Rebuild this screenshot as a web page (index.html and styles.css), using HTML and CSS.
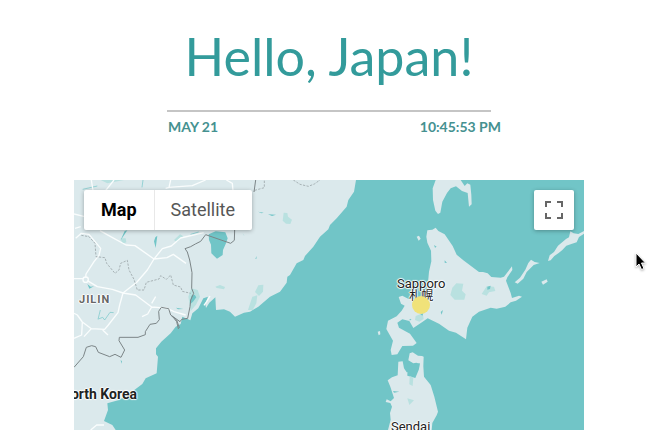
FILE: index.html
```html
<!DOCTYPE html>
<html lang="en">
<head>
<meta charset="utf-8">
<meta name="viewport" content="width=device-width, initial-scale=1">
<title>Hello, Japan!</title>
<link rel="stylesheet" href="styles.css">
</head>
<body>
<main class="page">
  <header class="intro">
    <h1 class="greeting">Hello, Japan!</h1>
    <div class="clock">
      <span>MAY 21</span>
      <time>10:45:53 PM</time>
    </div>
  </header>

  <section class="map" aria-label="Map of Japan">
    <svg class="terrain" viewBox="0 0 1530 750" preserveAspectRatio="xMidYMin slice" aria-hidden="true">
      <g class="land">
        <!-- mainland -->
        <path d="M0 0H846L840 35 823 60 818 80 788 115 768 135 763 148 738 170 718 200 693 228 688 240 668 250 648 285 640 290 638 308 618 335 588 350 553 380 528 395 510 398 483 410 468 395 450 388 426 390 424 352 406 368 396 384 394 372 402 350 388 355 373 385 355 400 349 421 325 410 320 432 305 440 290 460 262 485 246 505 246 523 252 530 248 580 215 595 205 612 185 627 160 645 135 660 100 670 102 690 90 723 115 735 125 750H0Z"/>
        <!-- Sakhalin -->
        <path d="M1085 0 1076 25 1077 60 1084 92 1092 102 1099 98 1105 65 1119 39 1130 25 1146 19 1164 33 1181 39 1185 80 1193 73 1192 45 1189 14 1180 10 1172 18 1160 0Z"/>
        <!-- Hokkaido -->
        <path d="M1060 151 1075 149 1085 143 1093 153 1112 163 1136 198 1148 224 1168 241 1194 260 1215 276 1227 276 1241 280 1252 291 1280 293 1290 290 1314 259 1315 270 1300 292 1296 302 1310 339 1314 354 1335 347 1344 350 1326 362 1310 367 1294 380 1268 386 1250 383 1215 395 1195 410 1180 443 1176 478 1146 458 1125 452 1095 431 1061 415 1045 426 1018 444 1006 423 985 418 970 428 975 443 1008 461 1028 489 1017 497 985 498 970 523 953 525 950 510 957 482 937 447 942 422 968 409 983 392 992 377 981 371 974 351 985 347 1004 357 1040 356 1060 330 1065 275 1072 244 1071 212 1060 188 1057 170Z"/>
        <!-- Honshu -->
        <path d="M973 545 986 544 990 565 998 577 1016 574 1022 569 1035 568 1036 551 1027 548 1018 550 1003 541 1007 520 1016 517 1032 527 1044 528 1049 530 1048 559 1050 590 1070 615 1081 650 1092 695 1088 706 1075 729 1073 750H942L950 719 948 699 954 680 949 669 935 666 938 658 950 664 960 654 949 620 941 601 954 592 971 586Z"/>
        <path d="M1001 548 1020 553 1038 550 1034 570 1024 594 1000 587Z" class="sea"/>
        <!-- islands -->
        <path d="M1028 170 1035 167 1040 176 1034 182ZM911 455 918 453 919 463 914 466ZM1322 307 1338 293 1354 269 1363 249 1371 239 1382 246 1397 249 1379 255 1358 276 1348 296 1331 311ZM1402 305 1418 298 1421 305 1407 314ZM1422 243 1427 226 1440 216 1452 197 1476 177 1485 172 1489 154 1499 160 1513 162 1530 153V161L1515 171 1508 187 1492 192 1477 197 1465 210 1454 219 1441 228 1430 241Z"/>
      </g>
      <g class="park">
        <path d="M629 98 640 99 642 110 654 119 649 132 636 131 626 122ZM424 320 438 315 453 321 450 328 428 324ZM553 316 568 314 567 335 555 348 543 336ZM535 350 550 346 547 370 536 390 522 390ZM352 325 371 330 378 350 366 374 350 393 343 350ZM1135 323 1147 310 1168 311 1164 332 1175 343 1171 359 1142 359 1129 345ZM1223 342 1238 319 1260 320 1264 333 1245 337 1238 347ZM1025 408 1046 400 1049 417 1036 425 1023 420ZM1007 589 1018 592 1016 618 1006 613ZM1000 655 1020 661 1006 675Z"/>
        <path d="M140 175 155 175 157 187 145 192ZM80 0 150 0 100 10ZM300 180 318 163 328 169 309 187Z"/>
      </g>
      <g class="water">
        <!-- Lake Khanka -->
        <path d="M404 163 425 154 454 157 461 175 456 190 447 210 446 225 429 236 412 220 411 194 405 180Z"/>
        <path d="M352 347 362 344 367 352 357 365 348 373ZM552 95 569 98 563 100ZM582 103 606 104 594 108ZM505 158 512 170 509 164ZM544 236 548 228 547 237ZM40 312 50 320 60 319 46 326ZM244 172 250 167 245 204 240 184ZM152 153 160 151 139 182ZM140 540 144 544 142 551ZM306 383 328 387 312 388ZM1080 195 1088 200 1083 203ZM1112 241 1119 249 1112 248ZM1100 396 1107 390 1103 404ZM1240 320 1250 317 1248 327 1240 329ZM1038 401 1048 400 1045 407ZM1008 416 1013 420 1006 421ZM957 633 976 635 960 638Z"/>
        <path class="river" d="M72 418 79 390M73 417 86 412 92 420 108 397 119 398M26 28 70 18M204 22 207 0M350 163 374 156"/>
      </g>
      <g class="road">
        <path d="M52 0 57 32M93 34 120 0M275 25 285 22 290 0M285 22 355 17 395 0M457 0 475 10 477 32M0 102 32 110M3 145 20 140M5 175 22 160 45 163 80 205 75 226 60 245 36 282 35 293M78 152 110 170 156 195 183 197 240 237 265 206 292 198 320 174 389 158M240 237 279 233 298 223 336 250M240 237 220 270 189 306 147 339 137 375 132 398 103 435 92 448 52 446 25 426 10 405 0 400M0 296 27 296M40 302 70 320 115 328 147 339M147 339 185 345 233 381 258 383 275 383M245 350 233 370M233 381 221 402 204 410M25 426 23 465 0 475M52 446 30 470M86 450 102 465M275 383 300 395 335 405M50 750 68 735 90 735M390 376 398 365 408 348"/>
        <circle cx="35" cy="299" r="8"/>
      </g>
      <path class="province" d="M22 166 45 170 63 190 66 230 93 233 98 250 123 280 135 270 140 250 160 241 165 270 180 298 190 330 210 330 217 307 255 297 260 287 277 298 290 285 298 315 320 321 325 334 350 340M542 31 571 23V0M658 0 678 13 703 19 721 12 738 0"/>
      <path class="border" d="M540 36 545 0M482 150 481 181 470 190 395 164 380 184 364 192 350 200 333 206 340 216 347 240 354 278 353 325 359 340 350 360 348 380 341 415 323 418 318 425 293 407 301 416 308 425 313 446 316 443 308 420 290 405 284 386 262 382 254 394 256 419 247 430 228 433 214 455 214 464 192 472H136L135 482 152 510 141 532 123 523 107 530 73 517 65 500 53 497 37 502 28 530 0 562"/>
    </svg>

    <span class="place province-name">JILIN</span>
    <span class="place country">North Korea</span>
    <span class="place sapporo">Sapporo<br><span class="native" lang="ja">札幌</span></span>
    <span class="place sendai">Sendai</span>
    <span class="marker"></span>

    <div class="controls">
      <div class="types">
        <button class="type active" type="button">Map</button>
        <button class="type" type="button">Satellite</button>
      </div>
      <button class="fullscreen" type="button" aria-label="Toggle fullscreen view">
        <svg viewBox="0 0 18 18" width="18" height="18" aria-hidden="true"><path d="M0 0H6V2H2V6H0ZM12 0H18V6H16V2H12ZM0 12H2V16H6V18H0ZM16 12H18V18H12V16H16Z"/></svg>
      </button>
    </div>
  </section>
</main>
<svg class="pointer" viewBox="0 0 14 20" width="14" height="20" aria-hidden="true"><path d="M1 1V15L4 12 6.500 17.500 9 16.500 6.500 11H10.500Z"/></svg>
</body>
</html>
```

FILE: styles.css
```css
* {
  box-sizing: border-box;
}

body {
  margin: 0;
  background: #fff;
  color: #339b9b;
  font-family: Lato, "Liberation Sans", sans-serif;
}

.page {
  padding: 24px 70px 0 74px;
}

.intro {
  max-width: 324px;
  margin: 0 auto 44px;
}

.greeting {
  margin: 0;
  padding-bottom: 22px;
  border-bottom: 2px solid #c5c5c5;
  font-size: 52px;
  font-weight: 400;
  line-height: 64px;
  text-align: center;
  white-space: nowrap;
}

.clock {
  display: flex;
  justify-content: space-between;
  margin-right: -10px;
  padding: 6px 0 0 1px;
  color: #459190;
  font-size: 14px;
  font-weight: 700;
  line-height: 18px;
}

.map {
  position: relative;
  overflow: hidden;
  background: #71c5c7;
  font-family: Roboto, "Noto Sans CJK JP", sans-serif;
}

.terrain {
  display: block;
  width: 100%;
  height: auto;
}

.land {
  fill: #dbe9ec;
}

.park {
  fill: #b9e1e0;
}

.sea,
.water {
  fill: #71c5c7;
}

.river,
.road,
.province,
.border {
  fill: none;
  stroke-linejoin: round;
}

.river {
  stroke: #71c5c7;
  stroke-width: 2px;
}

.road {
  stroke: #fafdfd;
  stroke-width: 4px;
}

.province {
  stroke: #8c9698;
  stroke-width: 2px;
  stroke-dasharray: 7 4;
}

.border {
  stroke: #7c8587;
  stroke-width: 3px;
}

.place {
  position: absolute;
  color: #222;
  font-size: 13px;
  line-height: 12px;
  text-align: center;
  white-space: nowrap;
  text-shadow: 1px 0 1px #fff, -1px 0 1px #fff, 0 1px 1px #fff, 0 -1px 1px #fff;
}

.native {
  font-size: 12px;
}

.province-name {
  top: 114px;
  left: 5px;
  color: #666;
  font-size: 11px;
  font-weight: 700;
  letter-spacing: 1px;
}

.country {
  top: 208px;
  left: -13px;
  font-size: 14px;
  font-weight: 700;
}

.sapporo {
  top: 98px;
  left: 323px;
}

.sendai {
  top: 241px;
  left: 317px;
}

.marker {
  position: absolute;
  top: 116px;
  left: 338px;
  width: 18px;
  height: 18px;
  border-radius: 50%;
  background: #f0e279;
}

.controls {
  position: absolute;
  inset: 10px 10px auto;
  display: flex;
  justify-content: space-between;
}

.types,
.fullscreen {
  border-radius: 2px;
  background: #fff;
  box-shadow: 0 1px 4px rgba(0, 0, 0, 0.3);
}

.types {
  display: flex;
}

.type {
  height: 40px;
  padding: 0 17px 2px;
  border: 0;
  background: none;
  color: #565656;
  font: 400 18px Roboto, sans-serif;
}

.type + .type {
  padding-left: 16px;
  border-left: 1px solid #e8e8e8;
}

.type.active {
  color: #000;
  font-weight: 700;
}

.fullscreen {
  display: flex;
  align-items: center;
  justify-content: center;
  width: 40px;
  height: 40px;
  padding: 0;
  border: 0;
}

.fullscreen path {
  fill: #666;
}

.pointer {
  position: absolute;
  top: 252px;
  right: 5px;
  filter: drop-shadow(0 1px 1px rgba(0, 0, 0, 0.3));
}

.pointer path {
  fill: #000;
  stroke: #fff;
  stroke-width: 1px;
}
```
